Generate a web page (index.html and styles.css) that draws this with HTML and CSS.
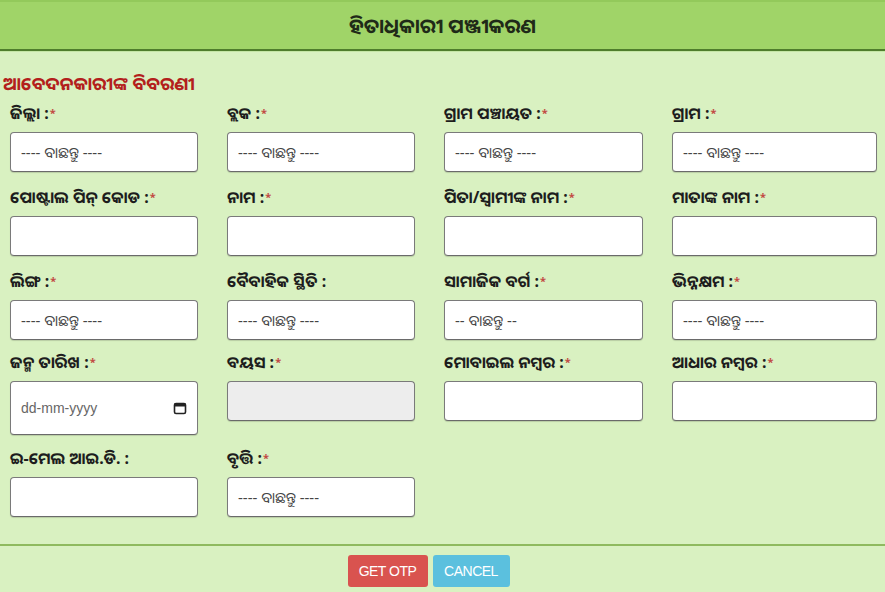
FILE: index.html
```html
<!DOCTYPE html>
<html lang="or">
<head>
<meta charset="utf-8">
<title>ହିତାଧିକାରୀ ପଞ୍ଜୀକରଣ</title>
<link rel="stylesheet" href="styles.css">
</head>
<body>
<header class="topbar"><h1 class="topbar-title">ହିତାଧିକାରୀ ପଞ୍ଜୀକରଣ</h1></header>
<main class="form-wrap">
  <h2 class="section-title">ଆବେଦନକାରୀଙ୍କ ବିବରଣୀ</h2>
  <div class="form-grid">
    <div class="field"><label class="lbl">ଜିଲ୍ଲା :<span class="req">*</span></label><div class="ctrl select">---- ବାଛନ୍ତୁ ----</div></div>
    <div class="field"><label class="lbl">ବ୍ଲକ :<span class="req">*</span></label><div class="ctrl select">---- ବାଛନ୍ତୁ ----</div></div>
    <div class="field"><label class="lbl">ଗ୍ରାମ ପଞ୍ଚାୟତ :<span class="req">*</span></label><div class="ctrl select">---- ବାଛନ୍ତୁ ----</div></div>
    <div class="field"><label class="lbl">ଗ୍ରାମ :<span class="req">*</span></label><div class="ctrl select">---- ବାଛନ୍ତୁ ----</div></div>

    <div class="field"><label class="lbl">ପୋଷ୍ଟାଲ ପିନ୍ କୋଡ :<span class="req">*</span></label><div class="ctrl"></div></div>
    <div class="field"><label class="lbl">ନାମ :<span class="req">*</span></label><div class="ctrl"></div></div>
    <div class="field"><label class="lbl">ପିତା/ସ୍ୱାମୀଙ୍କ ନାମ :<span class="req">*</span></label><div class="ctrl"></div></div>
    <div class="field"><label class="lbl">ମାତାଙ୍କ ନାମ :<span class="req">*</span></label><div class="ctrl"></div></div>

    <div class="field"><label class="lbl">ଲିଙ୍ଗ :<span class="req">*</span></label><div class="ctrl select">---- ବାଛନ୍ତୁ ----</div></div>
    <div class="field"><label class="lbl">ବୈବାହିକ ସ୍ଥିତି :</label><div class="ctrl select">---- ବାଛନ୍ତୁ ----</div></div>
    <div class="field"><label class="lbl">ସାମାଜିକ ବର୍ଗ :<span class="req">*</span></label><div class="ctrl select">-- ବାଛନ୍ତୁ --</div></div>
    <div class="field"><label class="lbl">ଭିନ୍ନକ୍ଷମ :<span class="req">*</span></label><div class="ctrl select">---- ବାଛନ୍ତୁ ----</div></div>

    <div class="field"><label class="lbl">ଜନ୍ମ ତାରିଖ :<span class="req">*</span></label>
      <div class="ctrl date"><span class="date-ph">dd-mm-yyyy</span>
        <svg class="cal" width="14" height="14" viewBox="0 0 14 14"><rect x="1.5" y="2.5" width="11" height="10" rx="1.5" fill="none" stroke="#222" stroke-width="1.6"/><rect x="1.5" y="2.5" width="11" height="3" fill="#222"/></svg>
      </div></div>
    <div class="field"><label class="lbl">ବୟସ :<span class="req">*</span></label><div class="ctrl disabled"></div></div>
    <div class="field"><label class="lbl">ମୋବାଇଲ ନମ୍ବର :<span class="req">*</span></label><div class="ctrl"></div></div>
    <div class="field"><label class="lbl">ଆଧାର ନମ୍ବର :<span class="req">*</span></label><div class="ctrl"></div></div>

    <div class="field"><label class="lbl">ଇ-ମେଲ ଆଇ.ଡି. :</label><div class="ctrl"></div></div>
    <div class="field"><label class="lbl">ବୃତ୍ତି :<span class="req">*</span></label><div class="ctrl select">---- ବାଛନ୍ତୁ ----</div></div>
  </div>
</main>
<footer class="actions">
  <button class="btn btn-red">GET OTP</button>
  <button class="btn btn-blue">CANCEL</button>
</footer>
</body>
</html>
```
FILE: styles.css
```css
html, body {
  margin: 0;
  padding: 0;
}
body {
  width: 885px;
  height: 592px;
  overflow: hidden;
  background: #d9f1c1;
  font-family: "Noto Sans", "Noto Sans Oriya", "Lato", sans-serif;
  color: #1e1e1e;
}
.topbar {
  height: 47px;
  background: #a0d468;
  border-top: 2px solid #93c95b;
  border-bottom: 2px solid #4f7d2c;
  box-shadow: 0 1px 0 #c5e6a6;
  display: flex;
  align-items: center;
  justify-content: center;
}
.topbar-title {
  margin: 0;
  font-size: 20px;
  font-weight: 700;
  color: #1f2a18;
}
.form-wrap {
  padding: 19px 0 0 0;
}
.section-title {
  margin: 0 0 0 3px;
  font-size: 18px;
  line-height: 26px;
  font-weight: 700;
  color: #b3201c;
}
.form-grid {
  display: grid;
  grid-template-columns: 188px 188px 199px 205px;
  column-gap: 29px;
  padding-left: 10px;
  align-items: start;
}
.field {
  display: flex;
  flex-direction: column;
  margin-top: 6px;
}
.form-grid .field:nth-child(n+5) {
  margin-top: 14px;
}
.form-grid .field:nth-child(n+13) {
  margin-top: 11px;
}
.form-grid .field:nth-child(n+17) {
  margin-top: 12px;
}
.lbl {
  font-size: 16px;
  font-weight: 700;
  line-height: 22px;
  height: 22px;
  margin-bottom: 8px;
  color: #1d1d1d;
  white-space: nowrap;
}
.req {
  color: #c24a44;
  font-size: 11px;
  vertical-align: top;
  margin-left: 1px;
}
.ctrl {
  box-sizing: border-box;
  height: 40px;
  background: #fff;
  border: 1px solid #7a7a7a;
  border-bottom-color: #6a6a6a;
  border-radius: 4px;
  box-shadow: 0 1px 1px rgba(0,0,0,0.15);
}
.select {
  display: flex;
  align-items: center;
  padding-left: 10px;
  font-size: 15px;
  color: #444;
  white-space: nowrap;
}
.disabled {
  background: #ededed;
}
.date {
  height: 54px;
  display: flex;
  align-items: center;
  justify-content: space-between;
  padding: 0 10px 0 10px;
}
.date-ph {
  font-family: "Liberation Sans", Arial, sans-serif;
  font-size: 14px;
  color: #666;
}
.cal {
  display: block;
}
.actions {
  position: absolute;
  left: 0;
  right: 0;
  top: 544px;
  border-top: 2px solid #8fba5f;
  padding-top: 9px;
  display: flex;
  justify-content: center;
  gap: 5px;
  padding-right: 28px;
}
.btn {
  height: 32px;
  border: none;
  border-radius: 3px;
  color: #fff;
  font-family: "Liberation Sans", Arial, sans-serif;
  font-size: 14px;
  letter-spacing: -0.5px;
  padding: 0;
  white-space: nowrap;
}
.btn-red {
  background: #d9534f;
  width: 80px;
}
.btn-blue {
  background: #5bc0de;
  width: 77px;
}
```
